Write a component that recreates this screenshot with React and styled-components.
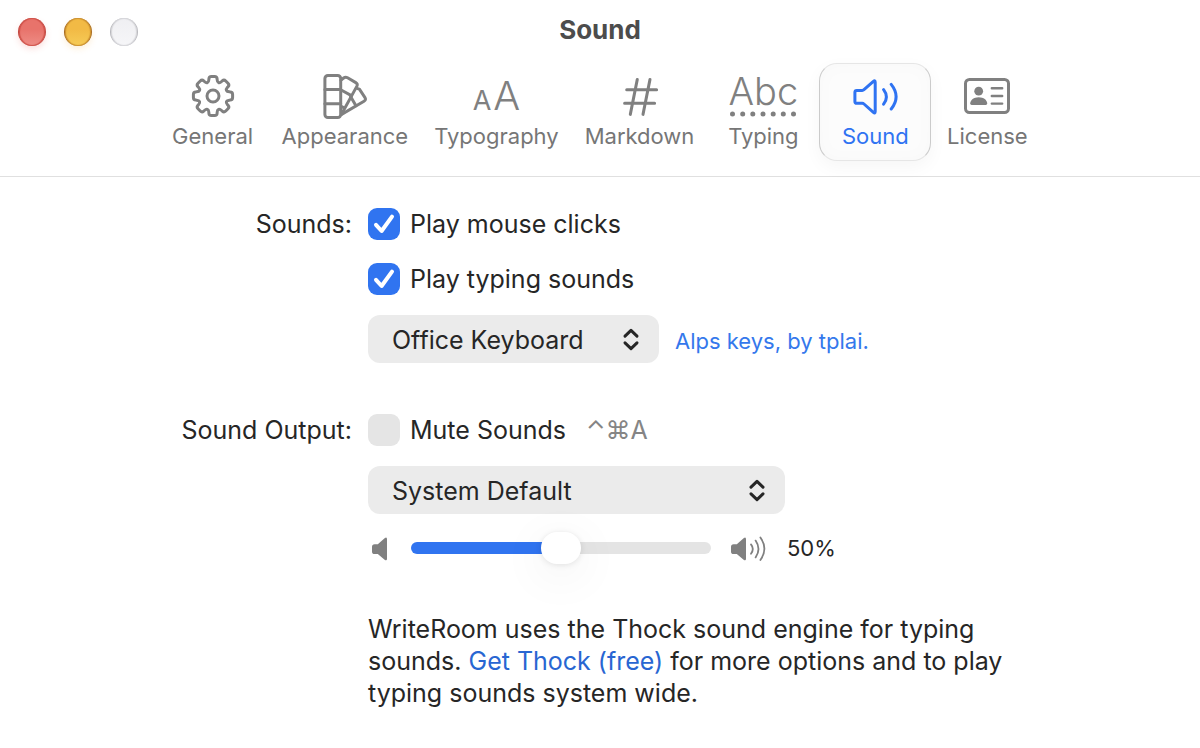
import React, { useState } from "react";
import styled, { createGlobalStyle, css } from "styled-components";

const GlobalStyle = createGlobalStyle`
  * { box-sizing: border-box; }
  body {
    margin: 0;
    background: #ffffff;
    color: #262626;
    font-family: Inter, "Liberation Sans", "DejaVu Sans", sans-serif;
    font-size: 25px;
    line-height: 32px;
  }
  button, select, input { font: inherit; color: inherit; margin: 0; }
`;

const Window = styled.div`
  min-height: 100vh;
  background: #ffffff;
`;

const Header = styled.header`
  border-bottom: 1px solid #e0e0e0;
  padding-bottom: 15px;
`;

const TitleBar = styled.div`
  display: grid;
  grid-template-columns: 1fr auto 1fr;
  align-items: center;
  height: 63px;
  padding: 1px 18px 0;
`;

const Title = styled.h1`
  margin: 0 0 4px;
  font-size: 26px;
  line-height: 32px;
  font-weight: 700;
  color: #4c4c4c;
`;

const Lights = styled.div`
  display: flex;
  gap: 18px;
`;

const lightTones = {
  close: css`
    background: linear-gradient(#e8736b 40%, #ee8d86);
    box-shadow: inset 0 0 1px 1px #cf5048, 0 3px 6px rgba(236, 106, 94, 0.2);
    border-color: #c2453d;
  `,
  minimize: css`
    background: linear-gradient(#f2ba45 40%, #f6cc58);
    box-shadow: inset 0 0 1px 1px #cf932f, 0 3px 6px rgba(244, 180, 80, 0.2);
    border-color: #a86a1c;
  `,
  zoom: css`
    background: linear-gradient(#efeff2, #f6f6f8);
    box-shadow: inset 0 0 1px 1px #d6d6da;
    border-color: #b8b8bd;
  `,
};

const Light = styled.button`
  width: 28px;
  height: 28px;
  padding: 0;
  border-width: 0 1px;
  border-style: solid;
  border-radius: 50%;
  ${(p) => lightTones[p.$tone]}
`;

const Toolbar = styled.nav`
  display: flex;
  justify-content: center;
`;

const Tab = styled.button`
  display: flex;
  flex-direction: column;
  align-items: center;
  gap: 2px;
  min-width: 112px;
  height: 98px;
  padding: 8px 12px 10px;
  border: 1px solid transparent;
  border-radius: 18px;
  background: transparent;
  color: #767676;
  font-size: 22px;
  line-height: 28px;
  ${(p) =>
    p.$active &&
    css`
      color: #2f73f2;
      background: #fcfcfc;
      border-color: #e6e6e6 #cbcbcb;
      box-shadow: 0 6px 18px rgba(0, 0, 0, 0.04), inset 0 0 16px #f8f8f8;
    `}
`;

const TabIcon = styled.span`
  display: flex;
  align-items: center;
  justify-content: center;
  height: 48px;
  flex: none;
  color: ${(p) => (p.$active ? "inherit" : "#808080")};
`;

const Glyph = styled.svg`
  display: block;
  flex: none;
  fill: none;
  stroke: currentColor;
  stroke-width: ${(p) => p.$weight || 3};
  stroke-linecap: round;
  stroke-linejoin: round;
`;

const LetterPair = styled.span`
  display: flex;
  align-items: baseline;
  gap: 2px;
  padding-top: 4px;
  font-size: 40px;
  line-height: 48px;
  font-weight: 300;

  small {
    font-size: 27px;
    font-weight: 400;
  }
`;

const Spelling = styled.span`
  display: flex;
  flex-direction: column;
  align-items: center;
  padding-bottom: 4px;
  font-size: 38px;
  line-height: 40px;
  font-weight: 300;
`;

const Form = styled.main`
  display: grid;
  grid-template-columns: 176px minmax(0, 1fr);
  column-gap: 16px;
  row-gap: 51px;
  width: 848px;
  max-width: 100%;
  margin: 0 auto;
  padding: 31px 0 40px;
`;

const GroupLabel = styled.div`
  text-align: right;
`;

const Group = styled.div`
  display: flex;
  flex-direction: column;
  align-items: flex-start;
  gap: ${(p) => p.$gap || 20}px;
`;

const Row = styled.div`
  display: flex;
  align-items: ${(p) => p.$align || "center"};
  gap: ${(p) => p.$gap || 20}px;
`;

const CheckLabel = styled.label`
  display: flex;
  align-items: center;
  gap: 10px;
`;

const CheckBox = styled.span`
  display: grid;
  width: 32px;
  height: 32px;

  > * { grid-area: 1 / 1; }

  input {
    appearance: none;
    width: 32px;
    height: 32px;
    border-radius: 9px;
    background: #e5e5e5;
  }
  svg {
    visibility: hidden;
    color: #ffffff;
    pointer-events: none;
  }
  input:checked { background: #3074f0; }
  input:checked + svg { visibility: visible; }
`;

const Shortcut = styled.kbd`
  font-family: inherit;
  color: #858585;
`;

const SelectBox = styled.span`
  display: grid;
  align-items: center;
  width: ${(p) => p.$width}px;
  max-width: 100%;

  > * { grid-area: 1 / 1; }

  select {
    appearance: none;
    width: 100%;
    height: 48px;
    padding: 2px 56px 0 24px;
    border: 0;
    border-radius: 12px;
    background: #ebebeb;
  }
  svg {
    justify-self: end;
    margin-right: 18px;
    pointer-events: none;
  }
`;

const Link = styled.a`
  color: #2866d2;
  text-decoration: none;
`;

const Credit = styled(Link)`
  color: #3478ec;
  font-size: 22px;
`;

const SpeakerIcon = styled.svg`
  display: block;
  flex: none;
  color: #808080;
`;

const Slider = styled.input`
  appearance: none;
  display: block;
  width: 300px;
  height: 32px;
  background: transparent;

  &::-webkit-slider-runnable-track {
    height: 12px;
    border-radius: 6px;
    background: linear-gradient(
      to right,
      #3074f0 var(--level),
      #e4e4e4 var(--level)
    );
  }
  &::-webkit-slider-thumb {
    appearance: none;
    width: 40px;
    height: 32px;
    margin-top: -10px;
    border-radius: 16px;
    background: #ffffff;
    box-shadow: 0 1px 6px rgba(0, 0, 0, 0.1), 0 10px 48px rgba(0, 0, 0, 0.08);
  }
`;

const Level = styled.output`
  font-size: 22px;
`;

const Note = styled.p`
  grid-column: 2;
  margin: -2px 0 0;
`;

/* Closed outline whose corners are eased by a short curve. */
function roundedPath(points, ease) {
  const n = points.length;
  const part = points.map((p, i) => {
    const prev = points[(i + n - 1) % n];
    const next = points[(i + 1) % n];
    const toward = (q) => {
      const d = Math.hypot(q[0] - p[0], q[1] - p[1]);
      const t = Math.min(ease / d, 0.5);
      return [p[0] + (q[0] - p[0]) * t, p[1] + (q[1] - p[1]) * t];
    };
    const a = toward(prev);
    const b = toward(next);
    return `${i ? "L" : "M"}${a.join(" ")}Q${p.join(" ")} ${b.join(" ")}`;
  });
  return part.join("") + "Z";
}

const gearPoints = [];
for (let i = 0; i < 8; i++) {
  [[-17, 14.6], [-11.5, 20], [11.5, 20], [17, 14.6]].forEach(([deg, r]) => {
    const a = ((i * 45 + deg) * Math.PI) / 180;
    gearPoints.push([24 + r * Math.sin(a), 24 - r * Math.cos(a)]);
  });
}
const gearPath = roundedPath(gearPoints, 2.4);

const GearIcon = () => (
  <Glyph width="48" height="48" viewBox="0 0 48 48">
    <path d={gearPath} />
    <circle cx="24" cy="24" r="6" />
  </Glyph>
);

const SwatchIcon = () => (
  <Glyph width="48" height="48" viewBox="0 0 48 48">
    <rect x="3.9" y="3.4" width="15.8" height="42.2" rx="3" />
    <path d="M3.9 17.4H19.7M3.9 31.7H19.7" />
    <path d="M20 8.2L22.6 6Q24.4 4.6 26.6 5.8L34.8 10.6Q37.2 12 35.8 14.4L20.6 42" />
    <path d="M20.6 18.2L30.4 23.6" />
    <path d="M36.6 16.6L38.4 17.2L44 25.6Q45.4 27.8 43 29.2L20.6 42.4" />
    <path d="M29.6 24.4L34.8 33.6" />
    <path d="M20.6 34.5L22.6 35.6" />
  </Glyph>
);

const HashIcon = () => (
  <Glyph width="48" height="48" viewBox="0 0 48 48">
    <path d="M10.7 17.7H40.6M8.6 31.3H38.6M21.3 7.4L14.3 42.4M34 7.4L27 42.4" />
  </Glyph>
);

const SoundIcon = () => (
  <Glyph width="48" height="48" viewBox="0 0 48 48">
    <path d="M5.8 18.4H11.2Q12.2 18.4 13 17.7L22.4 9.4Q24.2 8 24.2 10.2V39.4Q24.2 41.8 22.4 40.3L13 32Q12.2 31.3 11.2 31.3H5.8Q3.9 31.3 3.9 29.4V20.3Q3.9 18.4 5.8 18.4Z" />
    <path d="M32.6 17.6Q38.2 24.9 32.6 32.2M40.2 12.4Q50 24.7 40.2 37" />
  </Glyph>
);

const LicenseIcon = () => (
  <Glyph width="48" height="48" viewBox="0 0 48 48">
    <rect x="2.5" y="7.5" width="43" height="33" rx="4" />
    <circle cx="15.7" cy="19.2" r="4.4" fill="currentColor" stroke="none" />
    <path
      d="M7.2 31.6C7.2 28 10.8 25.2 15.7 25.2S24.2 28 24.2 31.6Q24.2 33 22.8 33H8.6Q7.2 33 7.2 31.6Z"
      fill="currentColor"
      stroke="none"
    />
    <path d="M28.8 16.3H39.2M28.8 24H39.2M28.8 31.6H39.2" strokeWidth="2.4" />
  </Glyph>
);

const TypographyIcon = () => (
  <LetterPair aria-hidden="true">
    <small>A</small>
    <span>A</span>
  </LetterPair>
);

const SpellingIcon = () => (
  <Spelling aria-hidden="true">
    <span>Abc</span>
    <Glyph width="68" height="6" viewBox="0 0 68 6" $weight={5}>
      <path d="M3.5 3h0M13.7 3h0M23.8 3h0M34 3h0M44.2 3h0M54.3 3h0M64.5 3h0" />
    </Glyph>
  </Spelling>
);

const Chevrons = () => (
  <Glyph width="20" height="24" viewBox="0 0 20 24" $weight={3}>
    <path d="M4 9.2L10 3.4L16 9.2M4 15.8L10 21.6L16 15.8" />
  </Glyph>
);

const CheckMark = () => (
  <Glyph width="32" height="32" viewBox="0 0 32 32" $weight={4}>
    <path d="M8 16.8L13.6 23L24 8.6" />
  </Glyph>
);

const speakerBody =
  "M2.6 7.2H5.8L12.6 1.2Q15 -.4 15 2.2V21.8Q15 24.2 12.6 22.8L5.8 17H2.6Q0 17 0 14.4V9.8Q0 7.2 2.6 7.2Z";

const QuietSpeaker = () => (
  <SpeakerIcon width="23" height="26" viewBox="-4 -2 23 26">
    <path d={speakerBody} fill="currentColor" />
  </SpeakerIcon>
);

const LoudSpeaker = () => (
  <SpeakerIcon width="36" height="26" viewBox="0 -2 36 26">
    <path d={speakerBody} fill="currentColor" />
    <path
      d="M20 7.4Q23.6 12 20 16.8M24.6 3.6Q30.4 12 24.6 20.4M29.4 .4Q37.4 12 29.4 23"
      fill="none"
      stroke="currentColor"
      strokeWidth="1.8"
      strokeLinecap="round"
    />
  </SpeakerIcon>
);

const tabs = [
  ["General", GearIcon],
  ["Appearance", SwatchIcon],
  ["Typography", TypographyIcon],
  ["Markdown", HashIcon],
  ["Typing", SpellingIcon],
  ["Sound", SoundIcon],
  ["License", LicenseIcon],
];

const Check = ({ children, defaultChecked }) => (
  <CheckLabel>
    <CheckBox>
      <input type="checkbox" defaultChecked={defaultChecked} />
      <CheckMark />
    </CheckBox>
    {children}
  </CheckLabel>
);

const Select = ({ label, width, option }) => (
  <SelectBox $width={width}>
    <select aria-label={label}>
      <option>{option}</option>
    </select>
    <Chevrons />
  </SelectBox>
);

export default function App() {
  const [tab, setTab] = useState("Sound");
  const [volume, setVolume] = useState(50);

  return (
    <Window>
      <GlobalStyle />
      <Header>
        <TitleBar>
          <Lights>
            <Light $tone="close" aria-label="Close" />
            <Light $tone="minimize" aria-label="Minimize" />
            <Light $tone="zoom" aria-label="Zoom" />
          </Lights>
          <Title>Sound</Title>
        </TitleBar>
        <Toolbar>
          {tabs.map(([name, Icon]) => (
            <Tab key={name} $active={name === tab} onClick={() => setTab(name)}>
              <TabIcon $active={name === tab}>
                <Icon />
              </TabIcon>
              {name}
            </Tab>
          ))}
        </Toolbar>
      </Header>
      <Form>
        <GroupLabel>Sounds:</GroupLabel>
        <Group $gap={20}>
          <Group $gap={23}>
            <Check defaultChecked>Play mouse clicks</Check>
            <Check defaultChecked>Play typing sounds</Check>
          </Group>
          <Row $gap={16} $align="baseline">
            <Select label="Keyboard" width={291} option="Office Keyboard" />
            <Credit href="#alps">Alps keys, by tplai.</Credit>
          </Row>
        </Group>
        <GroupLabel>Sound Output:</GroupLabel>
        <Group $gap={20}>
          <Row>
            <Check>Mute Sounds</Check>
            <Shortcut>⌃⌘A</Shortcut>
          </Row>
          <Group $gap={18}>
            <Select label="Output device" width={417} option="System Default" />
            <Row>
              <QuietSpeaker />
              <Slider
                type="range"
                min="0"
                max="100"
                aria-label="Volume"
                value={volume}
                onChange={(e) => setVolume(Number(e.target.value))}
                style={{ "--level": `${volume}%` }}
              />
              <LoudSpeaker />
              <Level>{volume}%</Level>
            </Row>
          </Group>
        </Group>
        <Note>
          WriteRoom uses the Thock sound engine for typing sounds.{" "}
          <Link href="#thock">Get Thock (free)</Link> for more options and to
          play typing sounds system wide.
        </Note>
      </Form>
    </Window>
  );
}
